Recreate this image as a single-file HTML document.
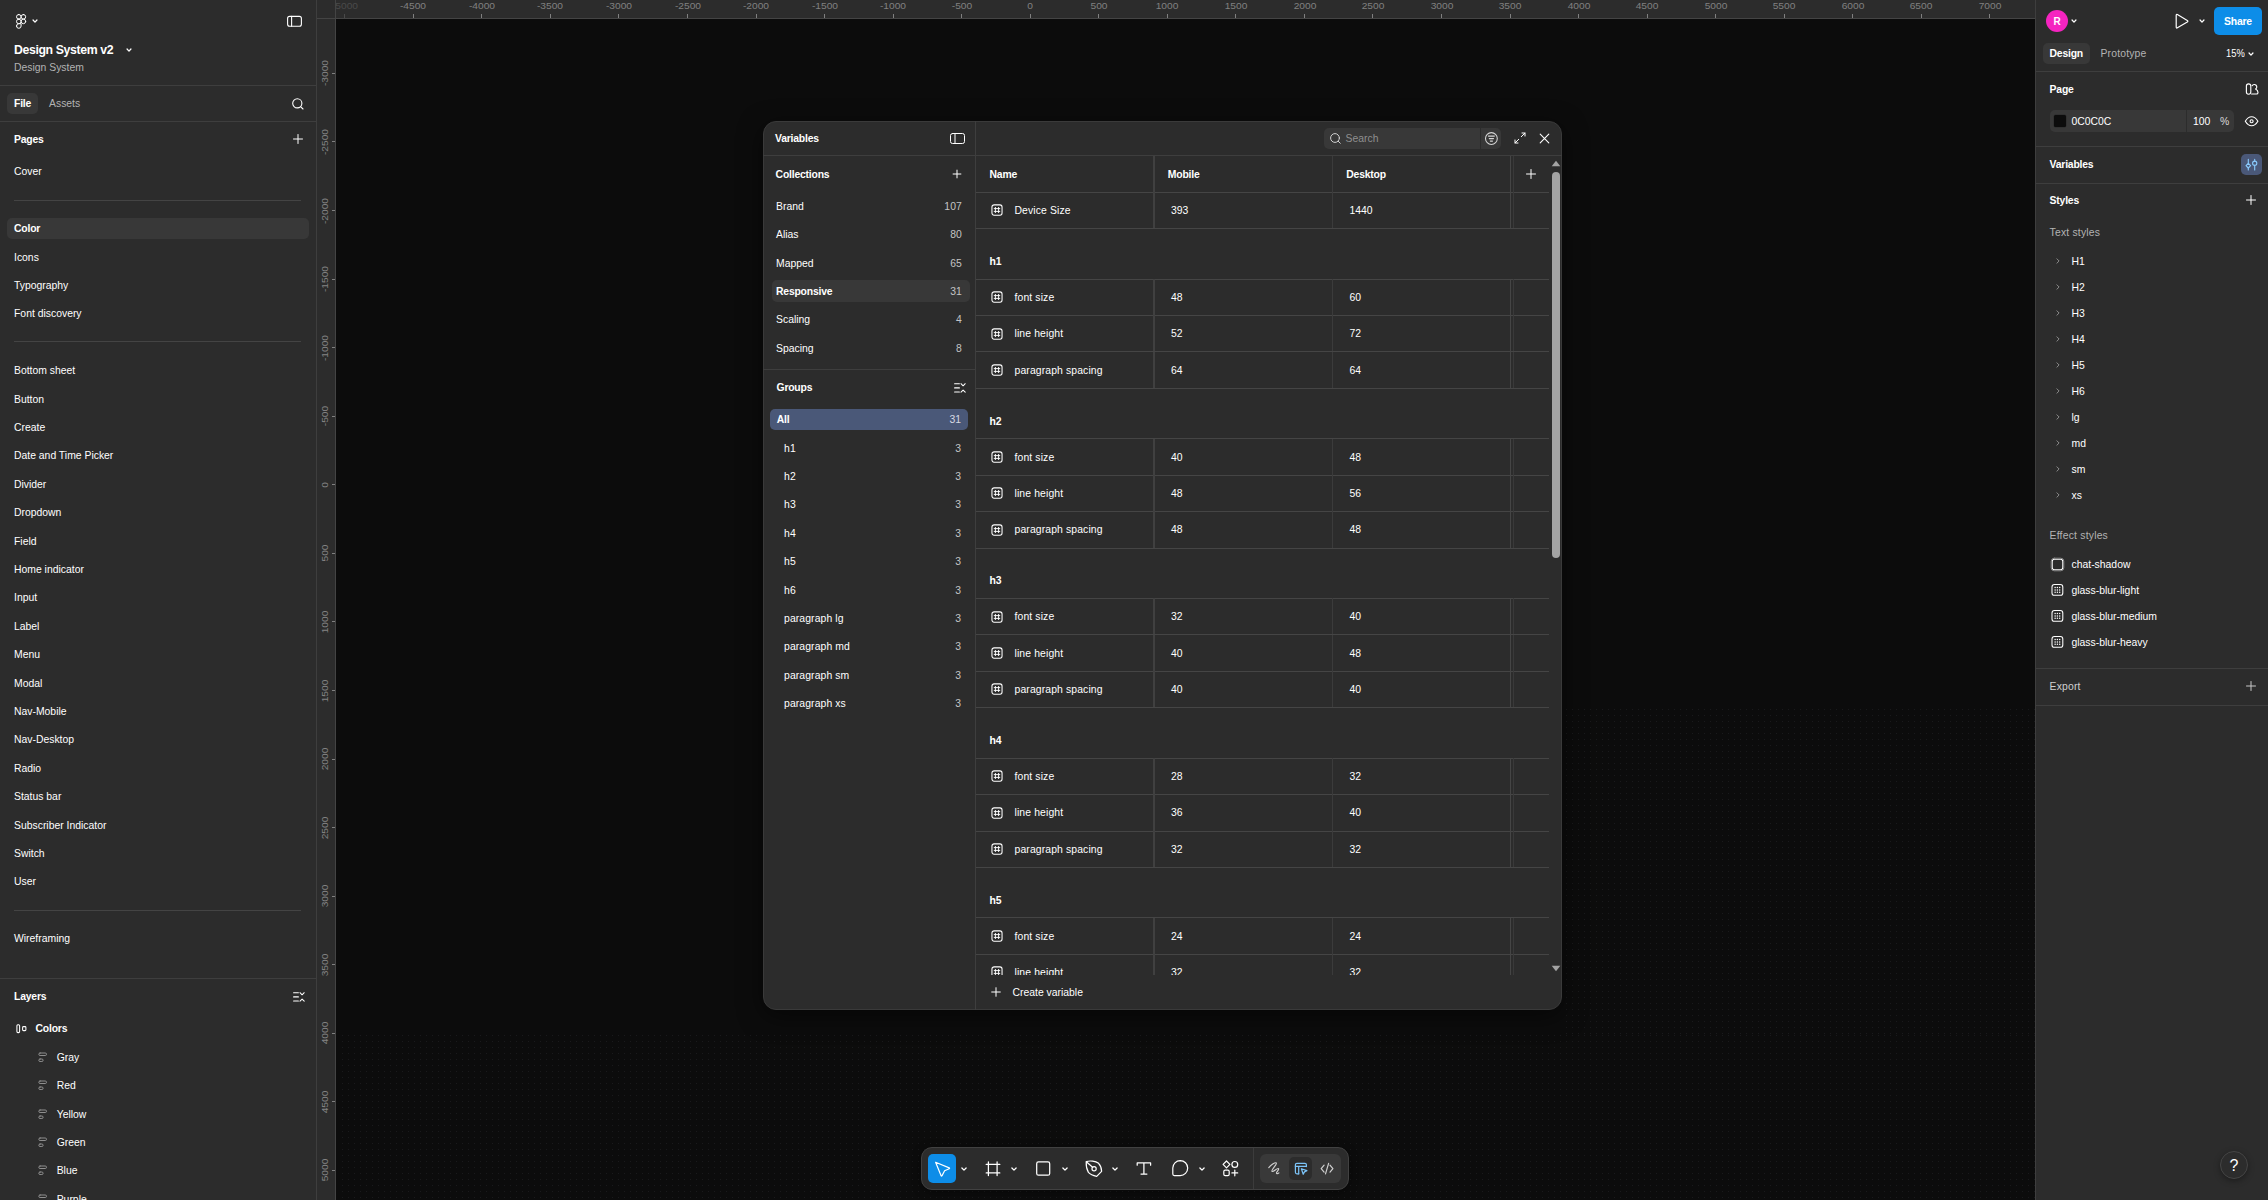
<!DOCTYPE html><html><head><meta charset="utf-8"><title>Design System v2 – Figma</title><style>
html,body{margin:0;padding:0;background:#0c0c0c}
body{width:2268px;height:1200px;overflow:hidden;position:relative;font-family:"Liberation Sans",sans-serif;font-size:10.4px;color:#fff}
.t{position:absolute;white-space:nowrap;line-height:16px;height:16px;color:#fff}
.t.b{font-weight:700;letter-spacing:-0.2px}
.t.g{color:#b3b3b3}
.ln{position:absolute}
.dots{position:absolute;background-image:radial-gradient(circle at 0.5px 0.5px,#1a1a1c 0.55px,rgba(26,26,28,0) 0.95px);background-size:6px 6px}
.ic{position:absolute;overflow:visible}
.clip{position:absolute;overflow:hidden}
.rt{position:absolute;width:60px;text-align:center;font-size:9px;line-height:13.6px;color:#848484;white-space:nowrap;transform:scaleX(1.135)}
.rv{position:absolute;width:60px;height:14px;text-align:center;font-size:9px;line-height:14px;color:#848484;white-space:nowrap;transform:rotate(-90deg) scaleX(1.135)}
</style></head><body>
<div class="dots" style="left:342px;top:1035px;width:1693px;height:165px"></div>
<div class="dots" style="left:1562px;top:708px;width:473px;height:327px;background-position:4px 1px"></div>
<div class="ln" style="left:0px;top:0px;width:316.00px;height:1200.00px;background:#2c2c2c;border-radius:0px;"></div>
<div class="ln" style="left:316px;top:0px;width:1px;height:1200px;background:#3e3e3e"></div>
<svg class="ic" style="left:15px;top:13px;" width="14" height="17" viewBox="0 0 14 17" fill="none" stroke="#fff" stroke-width="1" stroke-linecap="round" stroke-linejoin="round"><g stroke-width="1"><rect x="1.5" y="1.5" width="4.6" height="4.6" rx="2.3"/><rect x="6.1" y="1.5" width="4.6" height="4.6" rx="2.3"/><rect x="1.5" y="6.1" width="4.6" height="4.6" rx="2.3"/><circle cx="8.4" cy="8.4" r="2.3"/><path d="M1.5 13 a2.3 2.3 0 0 1 2.3 -2.3 h2.3 v2.3 a2.3 2.3 0 0 1 -4.6 0z"/></g></svg>
<svg class="ic" style="left:30.2px;top:17.400000000000002px" width="10" height="8" viewBox="0 0 10 8" fill="none" stroke="#fff" stroke-width="1.25" stroke-linecap="round" stroke-linejoin="round"><path d="M3.05 3.0 L5 5.1 L6.95 3.0"/></svg>
<svg class="ic" style="left:285px;top:13px" width="19" height="17" viewBox="285 13 19 17" fill="none" stroke="#fff" stroke-width="1.1" stroke-linecap="round" stroke-linejoin="round"><rect x="287.6" y="16.4" width="13.8" height="9.8" rx="2"/><path d="M291.6 16.4V26.2"/></svg>
<div class="t b" style="left:14px;top:42.00px;font-size:12.3px;letter-spacing:-0.38px">Design System v2</div>
<svg class="ic" style="left:124.00000000000001px;top:45.6px" width="10" height="8" viewBox="0 0 10 8" fill="none" stroke="#fff" stroke-width="1.25" stroke-linecap="round" stroke-linejoin="round"><path d="M3.05 3.0 L5 5.1 L6.95 3.0"/></svg>
<div class="t g" style="left:14px;top:60.30px;">Design System</div>
<div class="ln" style="left:0px;top:85px;width:316px;height:1px;background:#3e3e3e"></div>
<div class="ln" style="left:7px;top:93px;width:31.00px;height:21.00px;background:#383838;border-radius:5px;"></div>
<div class="t b" style="left:14px;top:95.80px;">File</div>
<div class="t g" style="left:49px;top:95.80px;">Assets</div>
<svg class="ic" style="left:291px;top:97px;stroke-width:1.1" width="14" height="14" viewBox="0 0 14 14" fill="none" stroke="#fff" stroke-width="1" stroke-linecap="round" stroke-linejoin="round"><circle cx="6.3" cy="6.3" r="4.6"/><path d="M9.8 9.8L12 12"/></svg>
<div class="ln" style="left:0px;top:121px;width:316px;height:1px;background:#3e3e3e"></div>
<div class="t b" style="left:14px;top:131.80px;">Pages</div>
<svg class="ic" style="left:291.5px;top:133px;" width="12" height="12" viewBox="0 0 12 12" fill="none" stroke="#fff" stroke-width="1" stroke-linecap="round" stroke-linejoin="round"><path d="M6 1.5V10.5M1.5 6H10.5" stroke="#fff"/></svg>
<div class="t " style="left:14px;top:164.30px;">Cover</div>
<div class="ln" style="left:14px;top:199.5px;width:287px;height:1px;background:#444"></div>
<div class="ln" style="left:7px;top:217.5px;width:301.50px;height:21.20px;background:#383838;border-radius:5px;"></div>
<div class="t b" style="left:14px;top:221.20px;">Color</div>
<div class="t " style="left:14px;top:249.60px;">Icons</div>
<div class="t " style="left:14px;top:277.99px;">Typography</div>
<div class="t " style="left:14px;top:306.38px;">Font discovery</div>
<div class="ln" style="left:14px;top:341.3px;width:287px;height:1px;background:#444"></div>
<div class="t " style="left:14px;top:363.30px;">Bottom sheet</div>
<div class="t " style="left:14px;top:391.69px;">Button</div>
<div class="t " style="left:14px;top:420.08px;">Create</div>
<div class="t " style="left:14px;top:448.47px;">Date and Time Picker</div>
<div class="t " style="left:14px;top:476.86px;">Divider</div>
<div class="t " style="left:14px;top:505.25px;">Dropdown</div>
<div class="t " style="left:14px;top:533.64px;">Field</div>
<div class="t " style="left:14px;top:562.03px;">Home indicator</div>
<div class="t " style="left:14px;top:590.42px;">Input</div>
<div class="t " style="left:14px;top:618.81px;">Label</div>
<div class="t " style="left:14px;top:647.20px;">Menu</div>
<div class="t " style="left:14px;top:675.59px;">Modal</div>
<div class="t " style="left:14px;top:703.98px;">Nav-Mobile</div>
<div class="t " style="left:14px;top:732.37px;">Nav-Desktop</div>
<div class="t " style="left:14px;top:760.76px;">Radio</div>
<div class="t " style="left:14px;top:789.15px;">Status bar</div>
<div class="t " style="left:14px;top:817.54px;">Subscriber Indicator</div>
<div class="t " style="left:14px;top:845.93px;">Switch</div>
<div class="t " style="left:14px;top:874.32px;">User</div>
<div class="ln" style="left:14px;top:909.5px;width:287px;height:1px;background:#444"></div>
<div class="t " style="left:14px;top:930.90px;">Wireframing</div>
<div class="ln" style="left:0px;top:978px;width:316px;height:1px;background:#3e3e3e"></div>
<div class="t b" style="left:14px;top:988.70px;">Layers</div>
<svg class="ic" style="left:292.5px;top:991.5px;" width="12" height="10" viewBox="0 0 12 10" fill="none" stroke="#fff" stroke-width="1" stroke-linecap="round" stroke-linejoin="round"><path d="M0.6 0.8H5.4M0.6 4.9H5.4M0.6 9H5.4" stroke-width="1.1"/><path d="M7 0.7L9.1 2.8L11.2 0.7M7 9.1L9.1 7.1L11.2 9.1" stroke-width="1.05"/></svg>
<svg class="ic" style="left:14px;top:1020px" width="16" height="17" viewBox="14 1020 16 17" fill="none" stroke="#fff" stroke-width="1.05" stroke-linecap="round" stroke-linejoin="round"><rect x="16.9" y="1024.7" width="2.7" height="7.9" rx="1"/><rect x="22.6" y="1026.6" width="3.3" height="4" rx="0.9"/></svg>
<div class="t b" style="left:35.5px;top:1020.80px;">Colors</div>
<svg class="ic" style="left:36px;top:1048.9px" width="14" height="16.0" viewBox="36 1048.9 14 16.0" fill="none" stroke="#8e8e8e" stroke-width="1.0" stroke-linecap="round" stroke-linejoin="round"><rect x="38.8" y="1052.90" width="7.7" height="2.5" rx="1.25"/><rect x="38.8" y="1058.90" width="4.3" height="2.5" rx="1.25"/></svg>
<div class="t " style="left:56.7px;top:1049.90px;">Gray</div>
<svg class="ic" style="left:36px;top:1077.2900000000002px" width="14" height="16.0" viewBox="36 1077.2900000000002 14 16.0" fill="none" stroke="#8e8e8e" stroke-width="1.0" stroke-linecap="round" stroke-linejoin="round"><rect x="38.8" y="1081.29" width="7.7" height="2.5" rx="1.25"/><rect x="38.8" y="1087.29" width="4.3" height="2.5" rx="1.25"/></svg>
<div class="t " style="left:56.7px;top:1078.29px;">Red</div>
<svg class="ic" style="left:36px;top:1105.68px" width="14" height="16.0" viewBox="36 1105.68 14 16.0" fill="none" stroke="#8e8e8e" stroke-width="1.0" stroke-linecap="round" stroke-linejoin="round"><rect x="38.8" y="1109.68" width="7.7" height="2.5" rx="1.25"/><rect x="38.8" y="1115.68" width="4.3" height="2.5" rx="1.25"/></svg>
<div class="t " style="left:56.7px;top:1106.68px;">Yellow</div>
<svg class="ic" style="left:36px;top:1134.0700000000002px" width="14" height="16.0" viewBox="36 1134.0700000000002 14 16.0" fill="none" stroke="#8e8e8e" stroke-width="1.0" stroke-linecap="round" stroke-linejoin="round"><rect x="38.8" y="1138.07" width="7.7" height="2.5" rx="1.25"/><rect x="38.8" y="1144.07" width="4.3" height="2.5" rx="1.25"/></svg>
<div class="t " style="left:56.7px;top:1135.07px;">Green</div>
<svg class="ic" style="left:36px;top:1162.46px" width="14" height="16.0" viewBox="36 1162.46 14 16.0" fill="none" stroke="#8e8e8e" stroke-width="1.0" stroke-linecap="round" stroke-linejoin="round"><rect x="38.8" y="1166.46" width="7.7" height="2.5" rx="1.25"/><rect x="38.8" y="1172.46" width="4.3" height="2.5" rx="1.25"/></svg>
<div class="t " style="left:56.7px;top:1163.46px;">Blue</div>
<svg class="ic" style="left:36px;top:1190.8500000000001px" width="14" height="16.0" viewBox="36 1190.8500000000001 14 16.0" fill="none" stroke="#8e8e8e" stroke-width="1.0" stroke-linecap="round" stroke-linejoin="round"><rect x="38.8" y="1194.85" width="7.7" height="2.5" rx="1.25"/><rect x="38.8" y="1200.85" width="4.3" height="2.5" rx="1.25"/></svg>
<div class="t " style="left:56.7px;top:1191.85px;">Purple</div>
<div class="ln" style="left:317px;top:0px;width:1718.00px;height:18.00px;background:#2c2c2c;border-radius:0px;"></div>
<div class="ln" style="left:317px;top:0px;width:18.00px;height:1200.00px;background:#2c2c2c;border-radius:0px;"></div>
<div class="ln" style="left:317px;top:18px;width:1718px;height:1px;background:#444"></div>
<div class="ln" style="left:335px;top:18px;width:1px;height:1182px;background:#444"></div>
<div class="rt" style="left:314.8px;top:0px;color:#4a4a4a">-5000</div>
<div class="ln" style="left:344px;top:14px;width:1px;height:4px;background:#4a4a4a"></div>
<div class="rt" style="left:383.3px;top:0px;color:#808080">-4500</div>
<div class="ln" style="left:413px;top:14px;width:1px;height:4px;background:#808080"></div>
<div class="rt" style="left:451.9px;top:0px;color:#808080">-4000</div>
<div class="ln" style="left:481px;top:14px;width:1px;height:4px;background:#808080"></div>
<div class="rt" style="left:520.4px;top:0px;color:#808080">-3500</div>
<div class="ln" style="left:550px;top:14px;width:1px;height:4px;background:#808080"></div>
<div class="rt" style="left:589.0px;top:0px;color:#808080">-3000</div>
<div class="ln" style="left:618px;top:14px;width:1px;height:4px;background:#808080"></div>
<div class="rt" style="left:657.5px;top:0px;color:#808080">-2500</div>
<div class="ln" style="left:687px;top:14px;width:1px;height:4px;background:#808080"></div>
<div class="rt" style="left:726.0px;top:0px;color:#808080">-2000</div>
<div class="ln" style="left:756px;top:14px;width:1px;height:4px;background:#808080"></div>
<div class="rt" style="left:794.6px;top:0px;color:#808080">-1500</div>
<div class="ln" style="left:824px;top:14px;width:1px;height:4px;background:#808080"></div>
<div class="rt" style="left:863.1px;top:0px;color:#808080">-1000</div>
<div class="ln" style="left:893px;top:14px;width:1px;height:4px;background:#808080"></div>
<div class="rt" style="left:931.7px;top:0px;color:#808080">-500</div>
<div class="ln" style="left:961px;top:14px;width:1px;height:4px;background:#808080"></div>
<div class="rt" style="left:1000.2px;top:0px;color:#808080">0</div>
<div class="ln" style="left:1030px;top:14px;width:1px;height:4px;background:#808080"></div>
<div class="rt" style="left:1068.8px;top:0px;color:#808080">500</div>
<div class="ln" style="left:1098px;top:14px;width:1px;height:4px;background:#808080"></div>
<div class="rt" style="left:1137.3px;top:0px;color:#808080">1000</div>
<div class="ln" style="left:1167px;top:14px;width:1px;height:4px;background:#808080"></div>
<div class="rt" style="left:1205.9px;top:0px;color:#808080">1500</div>
<div class="ln" style="left:1235px;top:14px;width:1px;height:4px;background:#808080"></div>
<div class="rt" style="left:1274.5px;top:0px;color:#808080">2000</div>
<div class="ln" style="left:1304px;top:14px;width:1px;height:4px;background:#808080"></div>
<div class="rt" style="left:1343.0px;top:0px;color:#808080">2500</div>
<div class="ln" style="left:1372px;top:14px;width:1px;height:4px;background:#808080"></div>
<div class="rt" style="left:1411.5px;top:0px;color:#808080">3000</div>
<div class="ln" style="left:1441px;top:14px;width:1px;height:4px;background:#808080"></div>
<div class="rt" style="left:1480.1px;top:0px;color:#808080">3500</div>
<div class="ln" style="left:1510px;top:14px;width:1px;height:4px;background:#808080"></div>
<div class="rt" style="left:1548.7px;top:0px;color:#808080">4000</div>
<div class="ln" style="left:1578px;top:14px;width:1px;height:4px;background:#808080"></div>
<div class="rt" style="left:1617.2px;top:0px;color:#808080">4500</div>
<div class="ln" style="left:1647px;top:14px;width:1px;height:4px;background:#808080"></div>
<div class="rt" style="left:1685.8px;top:0px;color:#808080">5000</div>
<div class="ln" style="left:1715px;top:14px;width:1px;height:4px;background:#808080"></div>
<div class="rt" style="left:1754.3px;top:0px;color:#808080">5500</div>
<div class="ln" style="left:1784px;top:14px;width:1px;height:4px;background:#808080"></div>
<div class="rt" style="left:1822.8px;top:0px;color:#808080">6000</div>
<div class="ln" style="left:1852px;top:14px;width:1px;height:4px;background:#808080"></div>
<div class="rt" style="left:1891.4px;top:0px;color:#808080">6500</div>
<div class="ln" style="left:1921px;top:14px;width:1px;height:4px;background:#808080"></div>
<div class="rt" style="left:1959.9px;top:0px;color:#808080">7000</div>
<div class="ln" style="left:1989px;top:14px;width:1px;height:4px;background:#808080"></div>
<div class="ln" style="left:317px;top:0px;width:18.00px;height:18.00px;background:#2c2c2c;border-radius:0px;"></div>
<div class="ln" style="left:335px;top:0px;width:1px;height:18px;background:#444"></div>
<div class="rv" style="left:294.6px;top:66.3px">-3000</div>
<div class="ln" style="left:332px;top:73px;width:3px;height:1px;background:#808080"></div>
<div class="rv" style="left:294.6px;top:134.9px">-2500</div>
<div class="ln" style="left:332px;top:141px;width:3px;height:1px;background:#808080"></div>
<div class="rv" style="left:294.6px;top:203.5px">-2000</div>
<div class="ln" style="left:332px;top:210px;width:3px;height:1px;background:#808080"></div>
<div class="rv" style="left:294.6px;top:272.0px">-1500</div>
<div class="ln" style="left:332px;top:279px;width:3px;height:1px;background:#808080"></div>
<div class="rv" style="left:294.6px;top:340.6px">-1000</div>
<div class="ln" style="left:332px;top:347px;width:3px;height:1px;background:#808080"></div>
<div class="rv" style="left:294.6px;top:409.2px">-500</div>
<div class="ln" style="left:332px;top:416px;width:3px;height:1px;background:#808080"></div>
<div class="rv" style="left:294.6px;top:477.8px">0</div>
<div class="ln" style="left:332px;top:484px;width:3px;height:1px;background:#808080"></div>
<div class="rv" style="left:294.6px;top:546.3px">500</div>
<div class="ln" style="left:332px;top:553px;width:3px;height:1px;background:#808080"></div>
<div class="rv" style="left:294.6px;top:614.9px">1000</div>
<div class="ln" style="left:332px;top:621px;width:3px;height:1px;background:#808080"></div>
<div class="rv" style="left:294.6px;top:683.5px">1500</div>
<div class="ln" style="left:332px;top:690px;width:3px;height:1px;background:#808080"></div>
<div class="rv" style="left:294.6px;top:752.0px">2000</div>
<div class="ln" style="left:332px;top:759px;width:3px;height:1px;background:#808080"></div>
<div class="rv" style="left:294.6px;top:820.6px">2500</div>
<div class="ln" style="left:332px;top:827px;width:3px;height:1px;background:#808080"></div>
<div class="rv" style="left:294.6px;top:889.2px">3000</div>
<div class="ln" style="left:332px;top:896px;width:3px;height:1px;background:#808080"></div>
<div class="rv" style="left:294.6px;top:957.7px">3500</div>
<div class="ln" style="left:332px;top:964px;width:3px;height:1px;background:#808080"></div>
<div class="rv" style="left:294.6px;top:1026.3px">4000</div>
<div class="ln" style="left:332px;top:1033px;width:3px;height:1px;background:#808080"></div>
<div class="rv" style="left:294.6px;top:1094.9px">4500</div>
<div class="ln" style="left:332px;top:1101px;width:3px;height:1px;background:#808080"></div>
<div class="rv" style="left:294.6px;top:1163.4px">5000</div>
<div class="ln" style="left:332px;top:1170px;width:3px;height:1px;background:#808080"></div>
<div class="ln" style="left:2035px;top:0px;width:233.00px;height:1200.00px;background:#2c2c2c;border-radius:0px;"></div>
<div class="ln" style="left:2035px;top:0px;width:1px;height:1200px;background:#3e3e3e"></div>
<div class="ln" style="left:2046px;top:10.3px;width:21.50px;height:21.50px;background:#f524c0;border-radius:11px;"></div>
<div class="t b" style="left:2053.4px;top:14.10px;font-size:10px;letter-spacing:0">R</div>
<svg class="ic" style="left:2069.2999999999997px;top:17.400000000000002px" width="10" height="8" viewBox="0 0 10 8" fill="none" stroke="#fff" stroke-width="1.25" stroke-linecap="round" stroke-linejoin="round"><path d="M3.05 3.0 L5 5.1 L6.95 3.0"/></svg>
<svg class="ic" style="left:2172px;top:11px" width="20" height="21" viewBox="2172 11 20 21" fill="none" stroke="#fff" stroke-width="1.2" stroke-linecap="round" stroke-linejoin="round"><path d="M2176.2 15.3 Q2176.2 13.9 2177.4 14.6 L2187.3 20.5 Q2188.4 21.2 2187.3 21.9 L2177.4 27.8 Q2176.2 28.5 2176.2 27.1 Z"/></svg>
<svg class="ic" style="left:2197.0px;top:17.400000000000002px" width="10" height="8" viewBox="0 0 10 8" fill="none" stroke="#fff" stroke-width="1.25" stroke-linecap="round" stroke-linejoin="round"><path d="M3.05 3.0 L5 5.1 L6.95 3.0"/></svg>
<div class="ln" style="left:2213.7px;top:7px;width:48.60px;height:28.00px;background:#0d8de8;border-radius:5px;"></div>
<div class="t b" style="left:2224px;top:14.20px;letter-spacing:-0.2px">Share</div>
<div class="ln" style="left:2042.5px;top:42.5px;width:47.50px;height:21.30px;background:#383838;border-radius:5px;"></div>
<div class="t b" style="left:2049.5px;top:46.30px;">Design</div>
<div class="t g" style="left:2100.5px;top:46.30px;letter-spacing:.17px">Prototype</div>
<div class="t " style="left:2226px;top:46.30px;transform:scaleX(.9);transform-origin:0 50%">15%</div>
<svg class="ic" style="left:2246.0px;top:49.6px" width="10" height="8" viewBox="0 0 10 8" fill="none" stroke="#fff" stroke-width="1.25" stroke-linecap="round" stroke-linejoin="round"><path d="M3.05 3.0 L5 5.1 L6.95 3.0"/></svg>
<div class="ln" style="left:2036px;top:71px;width:232px;height:1px;background:#3e3e3e"></div>
<div class="t b" style="left:2049.6px;top:81.70px;">Page</div>
<svg class="ic" style="left:2244px;top:81px" width="16" height="16" viewBox="2244 81 16 16" fill="none" stroke="#fff" stroke-width="1.15" stroke-linecap="round" stroke-linejoin="round"><rect x="2246.4" y="83.8" width="4.4" height="10.4" rx="2.2"/><path d="M2252.2 85.6 A2.5 2.5 0 1 1 2255.6 89.1 C2257.2 89.9 2258 91.2 2258 92.4 A1.6 1.6 0 0 1 2256.4 94 H2251.6"/></svg>
<div class="ln" style="left:2050px;top:110.2px;width:183.80px;height:21.60px;background:#383838;border-radius:5px;"></div>
<div class="ln" style="left:2054.2px;top:115px;width:11.80px;height:12.00px;background:#0c0c0c;border-radius:1.5px;box-shadow:0 0 0 0.5px #2a2a2a"></div>
<div class="t " style="left:2071.4px;top:114.20px;">0C0C0C</div>
<div class="ln" style="left:2186px;top:110.2px;width:1px;height:21.60000000000001px;background:#2c2c2c"></div>
<div class="t " style="left:2193px;top:114.20px;">100</div>
<div class="t " style="left:2220px;top:114.20px;color:#dcdcdc">%</div>
<svg class="ic" style="left:2243px;top:113px" width="18" height="17" viewBox="2243 113 18 17" fill="none" stroke="#fff" stroke-width="1.15" stroke-linecap="round" stroke-linejoin="round"><path d="M2245.3 121.2 C2247.2 118 2249.4 116.7 2251.6 116.7 S2256 118 2257.9 121.2 C2256 124.4 2253.8 125.7 2251.6 125.7 S2247.2 124.4 2245.3 121.2Z"/><circle cx="2251.6" cy="121.2" r="1.5"/></svg>
<div class="ln" style="left:2036px;top:146.3px;width:232px;height:1px;background:#3e3e3e"></div>
<div class="t b" style="left:2049.6px;top:156.70px;">Variables</div>
<div class="ln" style="left:2240.8px;top:153.8px;width:21.20px;height:21.20px;background:#4a5878;border-radius:5px;"></div>
<svg class="ic" style="left:2243px;top:156px" width="17" height="17" viewBox="2243 156 17 17" fill="none" stroke="#8accff" stroke-width="1.1" stroke-linecap="round" stroke-linejoin="round"><path d="M2248.3 159.4V163.4M2248.3 168V169.9M2254.7 159.4V161.1M2254.7 165.3V169.9"/><path d="M2248.3 163.4L2250.6 165.7L2248.3 168L2246 165.7Z"/><circle cx="2254.7" cy="163.2" r="2.1"/></svg>
<div class="ln" style="left:2036px;top:182.5px;width:232px;height:1px;background:#3e3e3e"></div>
<div class="t b" style="left:2049.6px;top:192.70px;">Styles</div>
<svg class="ic" style="left:2245px;top:194.3px;" width="12" height="12" viewBox="0 0 12 12" fill="none" stroke="#fff" stroke-width="1" stroke-linecap="round" stroke-linejoin="round"><path d="M6 1.5V10.5M1.5 6H10.5" stroke="#fff"/></svg>
<div class="t g" style="left:2049.6px;top:224.80px;letter-spacing:.18px">Text styles</div>
<svg class="ic" style="left:2054.5px;top:257.2px;" width="6" height="8" viewBox="0 0 6 8" fill="none" stroke="#fff" stroke-width="1" stroke-linecap="round" stroke-linejoin="round"><path d="M1.9 1.7999999999999998 L4.1 4 L1.9 6.2" stroke="#8a8a8a"/></svg>
<div class="t " style="left:2071.5px;top:254.20px;">H1</div>
<svg class="ic" style="left:2054.5px;top:283.23px;" width="6" height="8" viewBox="0 0 6 8" fill="none" stroke="#fff" stroke-width="1" stroke-linecap="round" stroke-linejoin="round"><path d="M1.9 1.7999999999999998 L4.1 4 L1.9 6.2" stroke="#8a8a8a"/></svg>
<div class="t " style="left:2071.5px;top:280.23px;">H2</div>
<svg class="ic" style="left:2054.5px;top:309.26px;" width="6" height="8" viewBox="0 0 6 8" fill="none" stroke="#fff" stroke-width="1" stroke-linecap="round" stroke-linejoin="round"><path d="M1.9 1.7999999999999998 L4.1 4 L1.9 6.2" stroke="#8a8a8a"/></svg>
<div class="t " style="left:2071.5px;top:306.26px;">H3</div>
<svg class="ic" style="left:2054.5px;top:335.28999999999996px;" width="6" height="8" viewBox="0 0 6 8" fill="none" stroke="#fff" stroke-width="1" stroke-linecap="round" stroke-linejoin="round"><path d="M1.9 1.7999999999999998 L4.1 4 L1.9 6.2" stroke="#8a8a8a"/></svg>
<div class="t " style="left:2071.5px;top:332.29px;">H4</div>
<svg class="ic" style="left:2054.5px;top:361.32px;" width="6" height="8" viewBox="0 0 6 8" fill="none" stroke="#fff" stroke-width="1" stroke-linecap="round" stroke-linejoin="round"><path d="M1.9 1.7999999999999998 L4.1 4 L1.9 6.2" stroke="#8a8a8a"/></svg>
<div class="t " style="left:2071.5px;top:358.32px;">H5</div>
<svg class="ic" style="left:2054.5px;top:387.35px;" width="6" height="8" viewBox="0 0 6 8" fill="none" stroke="#fff" stroke-width="1" stroke-linecap="round" stroke-linejoin="round"><path d="M1.9 1.7999999999999998 L4.1 4 L1.9 6.2" stroke="#8a8a8a"/></svg>
<div class="t " style="left:2071.5px;top:384.35px;">H6</div>
<svg class="ic" style="left:2054.5px;top:413.38px;" width="6" height="8" viewBox="0 0 6 8" fill="none" stroke="#fff" stroke-width="1" stroke-linecap="round" stroke-linejoin="round"><path d="M1.9 1.7999999999999998 L4.1 4 L1.9 6.2" stroke="#8a8a8a"/></svg>
<div class="t " style="left:2071.5px;top:410.38px;">lg</div>
<svg class="ic" style="left:2054.5px;top:439.40999999999997px;" width="6" height="8" viewBox="0 0 6 8" fill="none" stroke="#fff" stroke-width="1" stroke-linecap="round" stroke-linejoin="round"><path d="M1.9 1.7999999999999998 L4.1 4 L1.9 6.2" stroke="#8a8a8a"/></svg>
<div class="t " style="left:2071.5px;top:436.41px;">md</div>
<svg class="ic" style="left:2054.5px;top:465.44px;" width="6" height="8" viewBox="0 0 6 8" fill="none" stroke="#fff" stroke-width="1" stroke-linecap="round" stroke-linejoin="round"><path d="M1.9 1.7999999999999998 L4.1 4 L1.9 6.2" stroke="#8a8a8a"/></svg>
<div class="t " style="left:2071.5px;top:462.44px;">sm</div>
<svg class="ic" style="left:2054.5px;top:491.47px;" width="6" height="8" viewBox="0 0 6 8" fill="none" stroke="#fff" stroke-width="1" stroke-linecap="round" stroke-linejoin="round"><path d="M1.9 1.7999999999999998 L4.1 4 L1.9 6.2" stroke="#8a8a8a"/></svg>
<div class="t " style="left:2071.5px;top:488.47px;">xs</div>
<div class="t g" style="left:2049.6px;top:528.20px;letter-spacing:.2px">Effect styles</div>
<svg class="ic" style="left:2050px;top:556.5px;" width="15" height="15" viewBox="0 0 15 15" fill="none" stroke="#fff" stroke-width="1" stroke-linecap="round" stroke-linejoin="round"><rect x="2.2" y="2.2" width="10.6" height="10.6" rx="2.2" stroke="#fff" stroke-width="1.1"/><rect x="1.2" y="1.2" width="12.6" height="12.6" rx="3" stroke="#888" stroke-width="1"/></svg>
<div class="t " style="left:2071.5px;top:557.20px;">chat-shadow</div>
<svg class="ic" style="left:2050px;top:582.3px" width="16" height="16.0" viewBox="2050 582.3 16 16.0" fill="none" stroke="#fff" stroke-width="1.05" stroke-linecap="round" stroke-linejoin="round"><rect x="2052" y="584.8" width="10.8" height="10.8" rx="2.4"/><g fill="#fff" stroke="none"><circle cx="2055.1" cy="587.9" r=".75"/><circle cx="2055.1" cy="590.1999999999999" r=".75"/><circle cx="2055.1" cy="592.4999999999999" r=".75"/><circle cx="2057.4" cy="587.9" r=".75"/><circle cx="2057.4" cy="590.1999999999999" r=".75"/><circle cx="2057.4" cy="592.4999999999999" r=".75"/><circle cx="2059.7000000000003" cy="587.9" r=".75"/><circle cx="2059.7000000000003" cy="590.1999999999999" r=".75"/><circle cx="2059.7000000000003" cy="592.4999999999999" r=".75"/></g></svg>
<div class="t " style="left:2071.5px;top:583.30px;">glass-blur-light</div>
<svg class="ic" style="left:2050px;top:608.3299999999999px" width="16" height="16.0" viewBox="2050 608.3299999999999 16 16.0" fill="none" stroke="#fff" stroke-width="1.05" stroke-linecap="round" stroke-linejoin="round"><rect x="2052" y="610.8299999999999" width="10.8" height="10.8" rx="2.4"/><g fill="#fff" stroke="none"><circle cx="2055.1" cy="613.93" r=".75"/><circle cx="2055.1" cy="616.2299999999999" r=".75"/><circle cx="2055.1" cy="618.5299999999999" r=".75"/><circle cx="2057.4" cy="613.93" r=".75"/><circle cx="2057.4" cy="616.2299999999999" r=".75"/><circle cx="2057.4" cy="618.5299999999999" r=".75"/><circle cx="2059.7000000000003" cy="613.93" r=".75"/><circle cx="2059.7000000000003" cy="616.2299999999999" r=".75"/><circle cx="2059.7000000000003" cy="618.5299999999999" r=".75"/></g></svg>
<div class="t " style="left:2071.5px;top:609.33px;">glass-blur-medium</div>
<svg class="ic" style="left:2050px;top:634.3599999999999px" width="16" height="16.0" viewBox="2050 634.3599999999999 16 16.0" fill="none" stroke="#fff" stroke-width="1.05" stroke-linecap="round" stroke-linejoin="round"><rect x="2052" y="636.8599999999999" width="10.8" height="10.8" rx="2.4"/><g fill="#fff" stroke="none"><circle cx="2055.1" cy="639.9599999999999" r=".75"/><circle cx="2055.1" cy="642.2599999999999" r=".75"/><circle cx="2055.1" cy="644.5599999999998" r=".75"/><circle cx="2057.4" cy="639.9599999999999" r=".75"/><circle cx="2057.4" cy="642.2599999999999" r=".75"/><circle cx="2057.4" cy="644.5599999999998" r=".75"/><circle cx="2059.7000000000003" cy="639.9599999999999" r=".75"/><circle cx="2059.7000000000003" cy="642.2599999999999" r=".75"/><circle cx="2059.7000000000003" cy="644.5599999999998" r=".75"/></g></svg>
<div class="t " style="left:2071.5px;top:635.36px;">glass-blur-heavy</div>
<div class="ln" style="left:2036px;top:668px;width:232px;height:1px;background:#3e3e3e"></div>
<div class="t g" style="left:2049.6px;top:679.20px;color:#d0d0d0;letter-spacing:.17px">Export</div>
<svg class="ic" style="left:2245px;top:680px;" width="12" height="12" viewBox="0 0 12 12" fill="none" stroke="#fff" stroke-width="1" stroke-linecap="round" stroke-linejoin="round"><path d="M6 1.5V10.5M1.5 6H10.5" stroke="#c8c8c8"/></svg>
<div class="ln" style="left:2036px;top:704.5px;width:232px;height:1px;background:#3e3e3e"></div>
<div class="ln" style="left:2220px;top:1151px;width:28.00px;height:28.00px;background:#2c2c2c;border-radius:14px;box-sizing:border-box;border:1px solid #454545;box-shadow:0 2px 6px rgba(0,0,0,.35)"></div>
<div class="t " style="left:2229.4px;top:1158.00px;font-size:16px;line-height:16px">?</div>
<div class="ln" style="left:763px;top:121px;width:799px;height:889px;background:#2c2c2c;border-radius:13px;box-sizing:border-box;border:1px solid #3a3a3a;box-shadow:0 6px 24px rgba(0,0,0,.5)"></div>
<div class="ln" style="left:763px;top:155.3px;width:799px;height:1px;background:#3e3e3e"></div>
<div class="ln" style="left:975px;top:121px;width:1px;height:889px;background:#3e3e3e"></div>
<div class="t b" style="left:775px;top:131.00px;">Variables</div>
<svg class="ic" style="left:949px;top:131.5px;" width="17" height="13" viewBox="0 0 17 13" fill="none" stroke="#fff" stroke-width="1" stroke-linecap="round" stroke-linejoin="round"><rect x="1.5" y="1.5" width="14" height="10" rx="2"/><path d="M6 1.5V11.5"/></svg>
<div class="ln" style="left:1324.3px;top:128px;width:177.20px;height:20.80px;background:#383838;border-radius:5px;"></div>
<svg class="ic" style="left:1329px;top:132px;" width="13" height="13" viewBox="0 0 13 13" fill="none" stroke="#fff" stroke-width="1" stroke-linecap="round" stroke-linejoin="round"><circle cx="6" cy="6" r="4.4" stroke="#d0d0d0"/><path d="M9.3 9.3L11.3 11.3" stroke="#d0d0d0"/></svg>
<div class="t " style="left:1345.5px;top:131.30px;color:#8f8f8f">Search</div>
<div class="ln" style="left:1480px;top:128px;width:1px;height:20.80000000000001px;background:#2c2c2c"></div>
<svg class="ic" style="left:1483px;top:130px" width="17" height="17" viewBox="1483 130 17 17" fill="none" stroke="#d6d6d6" stroke-width="1.05" stroke-linecap="round" stroke-linejoin="round"><circle cx="1491.4" cy="138.5" r="5.9"/><path d="M1488.4 136.1H1494.4M1489.3 138.6H1493.5M1490.3 141.1H1492.5"/></svg>
<svg class="ic" style="left:1513px;top:131px;" width="14" height="14" viewBox="0 0 14 14" fill="none" stroke="#fff" stroke-width="1" stroke-linecap="round" stroke-linejoin="round"><path d="M8.3 5.7L12 2M9 2H12V5M5.7 8.3L2 12M2 9V12H5"/></svg>
<svg class="ic" style="left:1538px;top:131.5px;" width="13" height="13" viewBox="0 0 13 13" fill="none" stroke="#fff" stroke-width="1" stroke-linecap="round" stroke-linejoin="round"><path d="M2.2 2.2L10.8 10.8M10.8 2.2L2.2 10.8" stroke-width="1.1"/></svg>
<div class="t b" style="left:775.6px;top:167.00px;">Collections</div>
<svg class="ic" style="left:951.1px;top:167.8px;" width="12" height="12" viewBox="0 0 12 12" fill="none" stroke="#fff" stroke-width="1" stroke-linecap="round" stroke-linejoin="round"><path d="M6 2.1V9.9M2.1 6H9.9" stroke="#fff"/></svg>
<div class="ln" style="left:772px;top:280.2px;width:198.00px;height:21.60px;background:#383838;border-radius:5px;"></div>
<div class="t " style="left:776px;top:198.80px;">Brand</div>
<div class="t " style="right:1306.3px;top:198.80px;color:#c4c4c4">107</div>
<div class="t " style="left:776px;top:227.19px;">Alias</div>
<div class="t " style="right:1306.3px;top:227.19px;color:#c4c4c4">80</div>
<div class="t " style="left:776px;top:255.58px;">Mapped</div>
<div class="t " style="right:1306.3px;top:255.58px;color:#c4c4c4">65</div>
<div class="t b" style="left:776px;top:283.97px;">Responsive</div>
<div class="t " style="right:1306.3px;top:283.97px;color:#c4c4c4">31</div>
<div class="t " style="left:776px;top:312.36px;">Scaling</div>
<div class="t " style="right:1306.3px;top:312.36px;color:#c4c4c4">4</div>
<div class="t " style="left:776px;top:340.75px;">Spacing</div>
<div class="t " style="right:1306.3px;top:340.75px;color:#c4c4c4">8</div>
<div class="ln" style="left:763px;top:369.2px;width:212px;height:1px;background:#3e3e3e"></div>
<div class="t b" style="left:776.5px;top:380.40px;">Groups</div>
<svg class="ic" style="left:953.5px;top:382.5px;" width="12" height="10" viewBox="0 0 12 10" fill="none" stroke="#fff" stroke-width="1" stroke-linecap="round" stroke-linejoin="round"><path d="M0.6 0.8H5.4M0.6 4.9H5.4M0.6 9H5.4" stroke-width="1.1"/><path d="M7 0.7L9.1 2.8L11.2 0.7M7 9.1L9.1 7.1L11.2 9.1" stroke-width="1.05"/></svg>
<div class="ln" style="left:770px;top:408.7px;width:198.00px;height:21.10px;background:#4a5878;border-radius:5px;"></div>
<div class="t b" style="left:776.8px;top:412.30px;">All</div>
<div class="t " style="right:1307px;top:412.30px;color:#d6dae3">31</div>
<div class="t " style="left:784px;top:440.60px;letter-spacing:.1px">h1</div>
<div class="t " style="right:1307px;top:440.60px;color:#c4c4c4">3</div>
<div class="t " style="left:784px;top:468.99px;letter-spacing:.1px">h2</div>
<div class="t " style="right:1307px;top:468.99px;color:#c4c4c4">3</div>
<div class="t " style="left:784px;top:497.38px;letter-spacing:.1px">h3</div>
<div class="t " style="right:1307px;top:497.38px;color:#c4c4c4">3</div>
<div class="t " style="left:784px;top:525.77px;letter-spacing:.1px">h4</div>
<div class="t " style="right:1307px;top:525.77px;color:#c4c4c4">3</div>
<div class="t " style="left:784px;top:554.16px;letter-spacing:.1px">h5</div>
<div class="t " style="right:1307px;top:554.16px;color:#c4c4c4">3</div>
<div class="t " style="left:784px;top:582.55px;letter-spacing:.1px">h6</div>
<div class="t " style="right:1307px;top:582.55px;color:#c4c4c4">3</div>
<div class="t " style="left:784px;top:610.94px;letter-spacing:.1px">paragraph lg</div>
<div class="t " style="right:1307px;top:610.94px;color:#c4c4c4">3</div>
<div class="t " style="left:784px;top:639.33px;letter-spacing:.1px">paragraph md</div>
<div class="t " style="right:1307px;top:639.33px;color:#c4c4c4">3</div>
<div class="t " style="left:784px;top:667.72px;letter-spacing:.1px">paragraph sm</div>
<div class="t " style="right:1307px;top:667.72px;color:#c4c4c4">3</div>
<div class="t " style="left:784px;top:696.11px;letter-spacing:.1px">paragraph xs</div>
<div class="t " style="right:1307px;top:696.11px;color:#c4c4c4">3</div>
<div class="clip" style="left:0;top:156px;width:2268px;height:818.5px">
<div class="t b" style="left:989.5px;top:11.00px;">Name</div>
<div class="t b" style="left:1167.8px;top:11.00px;">Mobile</div>
<div class="t b" style="left:1346.3px;top:11.00px;">Desktop</div>
<svg class="ic" style="left:1525px;top:11.699999999999989px" width="12" height="12" viewBox="0 0 12 12" fill="none" stroke="#fff" stroke-linecap="round"><path d="M6 1.5V10.5M1.5 6H10.5"/></svg>
<div class="ln" style="left:1153px;top:0.00px;width:1.7px;height:36.00px;background:#404040"></div>
<div class="ln" style="left:1331.7px;top:0.00px;width:1.3px;height:36.00px;background:#3b3b3b"></div>
<div class="ln" style="left:1510px;top:0.00px;width:1px;height:36.00px;background:#454545"></div>
<div class="ln" style="left:1513.1px;top:0.00px;width:1.1px;height:36.00px;background:#393939"></div>
<div class="ln" style="left:976px;top:35.70px;width:573px;height:1px;background:#454545"></div>
<svg class="ic" style="left:990.1px;top:47.30px" width="14" height="14" viewBox="0 0 14 14" fill="none" stroke="#fff" stroke-width="1.05" stroke-linecap="round"><rect x="1.95" y="1.85" width="10.1" height="10.3" rx="2.1"/><path d="M5.4 4.4V9.6M8.6 4.4V9.6M4.2 5.6H9.8M4.2 8.4H9.8" stroke-width=".95"/></svg>
<div class="t " style="left:1014.5px;top:47.00px;letter-spacing:.12px">Device Size</div>
<div class="t " style="left:1171px;top:47.00px;">393</div>
<div class="t " style="left:1349.5px;top:47.00px;">1440</div>
<div class="ln" style="left:1153px;top:36.00px;width:1.7px;height:36.40px;background:#404040"></div>
<div class="ln" style="left:1331.7px;top:36.00px;width:1.3px;height:36.40px;background:#3b3b3b"></div>
<div class="ln" style="left:1510px;top:36.00px;width:1px;height:36.40px;background:#454545"></div>
<div class="ln" style="left:1513.1px;top:36.00px;width:1.1px;height:36.40px;background:#393939"></div>
<div class="ln" style="left:976px;top:72.10px;width:573px;height:1px;background:#454545"></div>
<div class="t b" style="left:989.5px;top:98.00px;">h1</div>
<div class="ln" style="left:976px;top:122.60px;width:573px;height:1px;background:#454545"></div>
<svg class="ic" style="left:990.1px;top:134.20px" width="14" height="14" viewBox="0 0 14 14" fill="none" stroke="#fff" stroke-width="1.05" stroke-linecap="round"><rect x="1.95" y="1.85" width="10.1" height="10.3" rx="2.1"/><path d="M5.4 4.4V9.6M8.6 4.4V9.6M4.2 5.6H9.8M4.2 8.4H9.8" stroke-width=".95"/></svg>
<div class="t " style="left:1014.5px;top:133.90px;letter-spacing:.12px">font size</div>
<div class="t " style="left:1171px;top:133.90px;">48</div>
<div class="t " style="left:1349.5px;top:133.90px;">60</div>
<div class="ln" style="left:1153px;top:122.90px;width:1.7px;height:36.40px;background:#404040"></div>
<div class="ln" style="left:1331.7px;top:122.90px;width:1.3px;height:36.40px;background:#3b3b3b"></div>
<div class="ln" style="left:1510px;top:122.90px;width:1px;height:36.40px;background:#454545"></div>
<div class="ln" style="left:1513.1px;top:122.90px;width:1.1px;height:36.40px;background:#393939"></div>
<div class="ln" style="left:976px;top:159.00px;width:573px;height:1px;background:#454545"></div>
<svg class="ic" style="left:990.1px;top:170.60px" width="14" height="14" viewBox="0 0 14 14" fill="none" stroke="#fff" stroke-width="1.05" stroke-linecap="round"><rect x="1.95" y="1.85" width="10.1" height="10.3" rx="2.1"/><path d="M5.4 4.4V9.6M8.6 4.4V9.6M4.2 5.6H9.8M4.2 8.4H9.8" stroke-width=".95"/></svg>
<div class="t " style="left:1014.5px;top:170.30px;letter-spacing:.12px">line height</div>
<div class="t " style="left:1171px;top:170.30px;">52</div>
<div class="t " style="left:1349.5px;top:170.30px;">72</div>
<div class="ln" style="left:1153px;top:159.30px;width:1.7px;height:36.40px;background:#404040"></div>
<div class="ln" style="left:1331.7px;top:159.30px;width:1.3px;height:36.40px;background:#3b3b3b"></div>
<div class="ln" style="left:1510px;top:159.30px;width:1px;height:36.40px;background:#454545"></div>
<div class="ln" style="left:1513.1px;top:159.30px;width:1.1px;height:36.40px;background:#393939"></div>
<div class="ln" style="left:976px;top:195.40px;width:573px;height:1px;background:#454545"></div>
<svg class="ic" style="left:990.1px;top:207.00px" width="14" height="14" viewBox="0 0 14 14" fill="none" stroke="#fff" stroke-width="1.05" stroke-linecap="round"><rect x="1.95" y="1.85" width="10.1" height="10.3" rx="2.1"/><path d="M5.4 4.4V9.6M8.6 4.4V9.6M4.2 5.6H9.8M4.2 8.4H9.8" stroke-width=".95"/></svg>
<div class="t " style="left:1014.5px;top:206.70px;letter-spacing:.12px">paragraph spacing</div>
<div class="t " style="left:1171px;top:206.70px;">64</div>
<div class="t " style="left:1349.5px;top:206.70px;">64</div>
<div class="ln" style="left:1153px;top:195.70px;width:1.7px;height:36.40px;background:#404040"></div>
<div class="ln" style="left:1331.7px;top:195.70px;width:1.3px;height:36.40px;background:#3b3b3b"></div>
<div class="ln" style="left:1510px;top:195.70px;width:1px;height:36.40px;background:#454545"></div>
<div class="ln" style="left:1513.1px;top:195.70px;width:1.1px;height:36.40px;background:#393939"></div>
<div class="ln" style="left:976px;top:231.80px;width:573px;height:1px;background:#454545"></div>
<div class="t b" style="left:989.5px;top:257.70px;">h2</div>
<div class="ln" style="left:976px;top:282.30px;width:573px;height:1px;background:#454545"></div>
<svg class="ic" style="left:990.1px;top:293.90px" width="14" height="14" viewBox="0 0 14 14" fill="none" stroke="#fff" stroke-width="1.05" stroke-linecap="round"><rect x="1.95" y="1.85" width="10.1" height="10.3" rx="2.1"/><path d="M5.4 4.4V9.6M8.6 4.4V9.6M4.2 5.6H9.8M4.2 8.4H9.8" stroke-width=".95"/></svg>
<div class="t " style="left:1014.5px;top:293.60px;letter-spacing:.12px">font size</div>
<div class="t " style="left:1171px;top:293.60px;">40</div>
<div class="t " style="left:1349.5px;top:293.60px;">48</div>
<div class="ln" style="left:1153px;top:282.60px;width:1.7px;height:36.40px;background:#404040"></div>
<div class="ln" style="left:1331.7px;top:282.60px;width:1.3px;height:36.40px;background:#3b3b3b"></div>
<div class="ln" style="left:1510px;top:282.60px;width:1px;height:36.40px;background:#454545"></div>
<div class="ln" style="left:1513.1px;top:282.60px;width:1.1px;height:36.40px;background:#393939"></div>
<div class="ln" style="left:976px;top:318.70px;width:573px;height:1px;background:#454545"></div>
<svg class="ic" style="left:990.1px;top:330.30px" width="14" height="14" viewBox="0 0 14 14" fill="none" stroke="#fff" stroke-width="1.05" stroke-linecap="round"><rect x="1.95" y="1.85" width="10.1" height="10.3" rx="2.1"/><path d="M5.4 4.4V9.6M8.6 4.4V9.6M4.2 5.6H9.8M4.2 8.4H9.8" stroke-width=".95"/></svg>
<div class="t " style="left:1014.5px;top:330.00px;letter-spacing:.12px">line height</div>
<div class="t " style="left:1171px;top:330.00px;">48</div>
<div class="t " style="left:1349.5px;top:330.00px;">56</div>
<div class="ln" style="left:1153px;top:319.00px;width:1.7px;height:36.40px;background:#404040"></div>
<div class="ln" style="left:1331.7px;top:319.00px;width:1.3px;height:36.40px;background:#3b3b3b"></div>
<div class="ln" style="left:1510px;top:319.00px;width:1px;height:36.40px;background:#454545"></div>
<div class="ln" style="left:1513.1px;top:319.00px;width:1.1px;height:36.40px;background:#393939"></div>
<div class="ln" style="left:976px;top:355.10px;width:573px;height:1px;background:#454545"></div>
<svg class="ic" style="left:990.1px;top:366.70px" width="14" height="14" viewBox="0 0 14 14" fill="none" stroke="#fff" stroke-width="1.05" stroke-linecap="round"><rect x="1.95" y="1.85" width="10.1" height="10.3" rx="2.1"/><path d="M5.4 4.4V9.6M8.6 4.4V9.6M4.2 5.6H9.8M4.2 8.4H9.8" stroke-width=".95"/></svg>
<div class="t " style="left:1014.5px;top:366.40px;letter-spacing:.12px">paragraph spacing</div>
<div class="t " style="left:1171px;top:366.40px;">48</div>
<div class="t " style="left:1349.5px;top:366.40px;">48</div>
<div class="ln" style="left:1153px;top:355.40px;width:1.7px;height:36.40px;background:#404040"></div>
<div class="ln" style="left:1331.7px;top:355.40px;width:1.3px;height:36.40px;background:#3b3b3b"></div>
<div class="ln" style="left:1510px;top:355.40px;width:1px;height:36.40px;background:#454545"></div>
<div class="ln" style="left:1513.1px;top:355.40px;width:1.1px;height:36.40px;background:#393939"></div>
<div class="ln" style="left:976px;top:391.50px;width:573px;height:1px;background:#454545"></div>
<div class="t b" style="left:989.5px;top:417.40px;">h3</div>
<div class="ln" style="left:976px;top:442.00px;width:573px;height:1px;background:#454545"></div>
<svg class="ic" style="left:990.1px;top:453.60px" width="14" height="14" viewBox="0 0 14 14" fill="none" stroke="#fff" stroke-width="1.05" stroke-linecap="round"><rect x="1.95" y="1.85" width="10.1" height="10.3" rx="2.1"/><path d="M5.4 4.4V9.6M8.6 4.4V9.6M4.2 5.6H9.8M4.2 8.4H9.8" stroke-width=".95"/></svg>
<div class="t " style="left:1014.5px;top:453.30px;letter-spacing:.12px">font size</div>
<div class="t " style="left:1171px;top:453.30px;">32</div>
<div class="t " style="left:1349.5px;top:453.30px;">40</div>
<div class="ln" style="left:1153px;top:442.30px;width:1.7px;height:36.40px;background:#404040"></div>
<div class="ln" style="left:1331.7px;top:442.30px;width:1.3px;height:36.40px;background:#3b3b3b"></div>
<div class="ln" style="left:1510px;top:442.30px;width:1px;height:36.40px;background:#454545"></div>
<div class="ln" style="left:1513.1px;top:442.30px;width:1.1px;height:36.40px;background:#393939"></div>
<div class="ln" style="left:976px;top:478.40px;width:573px;height:1px;background:#454545"></div>
<svg class="ic" style="left:990.1px;top:490.00px" width="14" height="14" viewBox="0 0 14 14" fill="none" stroke="#fff" stroke-width="1.05" stroke-linecap="round"><rect x="1.95" y="1.85" width="10.1" height="10.3" rx="2.1"/><path d="M5.4 4.4V9.6M8.6 4.4V9.6M4.2 5.6H9.8M4.2 8.4H9.8" stroke-width=".95"/></svg>
<div class="t " style="left:1014.5px;top:489.70px;letter-spacing:.12px">line height</div>
<div class="t " style="left:1171px;top:489.70px;">40</div>
<div class="t " style="left:1349.5px;top:489.70px;">48</div>
<div class="ln" style="left:1153px;top:478.70px;width:1.7px;height:36.40px;background:#404040"></div>
<div class="ln" style="left:1331.7px;top:478.70px;width:1.3px;height:36.40px;background:#3b3b3b"></div>
<div class="ln" style="left:1510px;top:478.70px;width:1px;height:36.40px;background:#454545"></div>
<div class="ln" style="left:1513.1px;top:478.70px;width:1.1px;height:36.40px;background:#393939"></div>
<div class="ln" style="left:976px;top:514.80px;width:573px;height:1px;background:#454545"></div>
<svg class="ic" style="left:990.1px;top:526.40px" width="14" height="14" viewBox="0 0 14 14" fill="none" stroke="#fff" stroke-width="1.05" stroke-linecap="round"><rect x="1.95" y="1.85" width="10.1" height="10.3" rx="2.1"/><path d="M5.4 4.4V9.6M8.6 4.4V9.6M4.2 5.6H9.8M4.2 8.4H9.8" stroke-width=".95"/></svg>
<div class="t " style="left:1014.5px;top:526.10px;letter-spacing:.12px">paragraph spacing</div>
<div class="t " style="left:1171px;top:526.10px;">40</div>
<div class="t " style="left:1349.5px;top:526.10px;">40</div>
<div class="ln" style="left:1153px;top:515.10px;width:1.7px;height:36.40px;background:#404040"></div>
<div class="ln" style="left:1331.7px;top:515.10px;width:1.3px;height:36.40px;background:#3b3b3b"></div>
<div class="ln" style="left:1510px;top:515.10px;width:1px;height:36.40px;background:#454545"></div>
<div class="ln" style="left:1513.1px;top:515.10px;width:1.1px;height:36.40px;background:#393939"></div>
<div class="ln" style="left:976px;top:551.20px;width:573px;height:1px;background:#454545"></div>
<div class="t b" style="left:989.5px;top:577.10px;">h4</div>
<div class="ln" style="left:976px;top:601.70px;width:573px;height:1px;background:#454545"></div>
<svg class="ic" style="left:990.1px;top:613.30px" width="14" height="14" viewBox="0 0 14 14" fill="none" stroke="#fff" stroke-width="1.05" stroke-linecap="round"><rect x="1.95" y="1.85" width="10.1" height="10.3" rx="2.1"/><path d="M5.4 4.4V9.6M8.6 4.4V9.6M4.2 5.6H9.8M4.2 8.4H9.8" stroke-width=".95"/></svg>
<div class="t " style="left:1014.5px;top:613.00px;letter-spacing:.12px">font size</div>
<div class="t " style="left:1171px;top:613.00px;">28</div>
<div class="t " style="left:1349.5px;top:613.00px;">32</div>
<div class="ln" style="left:1153px;top:602.00px;width:1.7px;height:36.40px;background:#404040"></div>
<div class="ln" style="left:1331.7px;top:602.00px;width:1.3px;height:36.40px;background:#3b3b3b"></div>
<div class="ln" style="left:1510px;top:602.00px;width:1px;height:36.40px;background:#454545"></div>
<div class="ln" style="left:1513.1px;top:602.00px;width:1.1px;height:36.40px;background:#393939"></div>
<div class="ln" style="left:976px;top:638.10px;width:573px;height:1px;background:#454545"></div>
<svg class="ic" style="left:990.1px;top:649.70px" width="14" height="14" viewBox="0 0 14 14" fill="none" stroke="#fff" stroke-width="1.05" stroke-linecap="round"><rect x="1.95" y="1.85" width="10.1" height="10.3" rx="2.1"/><path d="M5.4 4.4V9.6M8.6 4.4V9.6M4.2 5.6H9.8M4.2 8.4H9.8" stroke-width=".95"/></svg>
<div class="t " style="left:1014.5px;top:649.40px;letter-spacing:.12px">line height</div>
<div class="t " style="left:1171px;top:649.40px;">36</div>
<div class="t " style="left:1349.5px;top:649.40px;">40</div>
<div class="ln" style="left:1153px;top:638.40px;width:1.7px;height:36.40px;background:#404040"></div>
<div class="ln" style="left:1331.7px;top:638.40px;width:1.3px;height:36.40px;background:#3b3b3b"></div>
<div class="ln" style="left:1510px;top:638.40px;width:1px;height:36.40px;background:#454545"></div>
<div class="ln" style="left:1513.1px;top:638.40px;width:1.1px;height:36.40px;background:#393939"></div>
<div class="ln" style="left:976px;top:674.50px;width:573px;height:1px;background:#454545"></div>
<svg class="ic" style="left:990.1px;top:686.10px" width="14" height="14" viewBox="0 0 14 14" fill="none" stroke="#fff" stroke-width="1.05" stroke-linecap="round"><rect x="1.95" y="1.85" width="10.1" height="10.3" rx="2.1"/><path d="M5.4 4.4V9.6M8.6 4.4V9.6M4.2 5.6H9.8M4.2 8.4H9.8" stroke-width=".95"/></svg>
<div class="t " style="left:1014.5px;top:685.80px;letter-spacing:.12px">paragraph spacing</div>
<div class="t " style="left:1171px;top:685.80px;">32</div>
<div class="t " style="left:1349.5px;top:685.80px;">32</div>
<div class="ln" style="left:1153px;top:674.80px;width:1.7px;height:36.40px;background:#404040"></div>
<div class="ln" style="left:1331.7px;top:674.80px;width:1.3px;height:36.40px;background:#3b3b3b"></div>
<div class="ln" style="left:1510px;top:674.80px;width:1px;height:36.40px;background:#454545"></div>
<div class="ln" style="left:1513.1px;top:674.80px;width:1.1px;height:36.40px;background:#393939"></div>
<div class="ln" style="left:976px;top:710.90px;width:573px;height:1px;background:#454545"></div>
<div class="t b" style="left:989.5px;top:736.80px;">h5</div>
<div class="ln" style="left:976px;top:761.40px;width:573px;height:1px;background:#454545"></div>
<svg class="ic" style="left:990.1px;top:773.00px" width="14" height="14" viewBox="0 0 14 14" fill="none" stroke="#fff" stroke-width="1.05" stroke-linecap="round"><rect x="1.95" y="1.85" width="10.1" height="10.3" rx="2.1"/><path d="M5.4 4.4V9.6M8.6 4.4V9.6M4.2 5.6H9.8M4.2 8.4H9.8" stroke-width=".95"/></svg>
<div class="t " style="left:1014.5px;top:772.70px;letter-spacing:.12px">font size</div>
<div class="t " style="left:1171px;top:772.70px;">24</div>
<div class="t " style="left:1349.5px;top:772.70px;">24</div>
<div class="ln" style="left:1153px;top:761.70px;width:1.7px;height:36.40px;background:#404040"></div>
<div class="ln" style="left:1331.7px;top:761.70px;width:1.3px;height:36.40px;background:#3b3b3b"></div>
<div class="ln" style="left:1510px;top:761.70px;width:1px;height:36.40px;background:#454545"></div>
<div class="ln" style="left:1513.1px;top:761.70px;width:1.1px;height:36.40px;background:#393939"></div>
<div class="ln" style="left:976px;top:797.80px;width:573px;height:1px;background:#454545"></div>
<svg class="ic" style="left:990.1px;top:809.40px" width="14" height="14" viewBox="0 0 14 14" fill="none" stroke="#fff" stroke-width="1.05" stroke-linecap="round"><rect x="1.95" y="1.85" width="10.1" height="10.3" rx="2.1"/><path d="M5.4 4.4V9.6M8.6 4.4V9.6M4.2 5.6H9.8M4.2 8.4H9.8" stroke-width=".95"/></svg>
<div class="t " style="left:1014.5px;top:809.10px;letter-spacing:.12px">line height</div>
<div class="t " style="left:1171px;top:809.10px;">32</div>
<div class="t " style="left:1349.5px;top:809.10px;">32</div>
<div class="ln" style="left:1153px;top:798.10px;width:1.7px;height:36.40px;background:#404040"></div>
<div class="ln" style="left:1331.7px;top:798.10px;width:1.3px;height:36.40px;background:#3b3b3b"></div>
<div class="ln" style="left:1510px;top:798.10px;width:1px;height:36.40px;background:#454545"></div>
<div class="ln" style="left:1513.1px;top:798.10px;width:1.1px;height:36.40px;background:#393939"></div>
<div class="ln" style="left:976px;top:834.20px;width:573px;height:1px;background:#454545"></div>
<svg class="ic" style="left:990.1px;top:845.80px" width="14" height="14" viewBox="0 0 14 14" fill="none" stroke="#fff" stroke-width="1.05" stroke-linecap="round"><rect x="1.95" y="1.85" width="10.1" height="10.3" rx="2.1"/><path d="M5.4 4.4V9.6M8.6 4.4V9.6M4.2 5.6H9.8M4.2 8.4H9.8" stroke-width=".95"/></svg>
<div class="t " style="left:1014.5px;top:845.50px;letter-spacing:.12px">paragraph spacing</div>
<div class="t " style="left:1171px;top:845.50px;">32</div>
<div class="t " style="left:1349.5px;top:845.50px;">32</div>
<div class="ln" style="left:1153px;top:834.50px;width:1.7px;height:36.40px;background:#404040"></div>
<div class="ln" style="left:1331.7px;top:834.50px;width:1.3px;height:36.40px;background:#3b3b3b"></div>
<div class="ln" style="left:1510px;top:834.50px;width:1px;height:36.40px;background:#454545"></div>
<div class="ln" style="left:1513.1px;top:834.50px;width:1.1px;height:36.40px;background:#393939"></div>
<div class="ln" style="left:976px;top:870.60px;width:573px;height:1px;background:#454545"></div>
</div>
<div class="ln" style="left:1552.4px;top:172px;width:7.90px;height:386.00px;background:#a3a3a3;border-radius:4px;"></div>
<svg class="ic" style="left:1551.2px;top:159.7px" width="10" height="7" viewBox="0 0 10 7"><path d="M5 0.8L9.3 6.2H0.7Z" fill="#a3a3a3"/></svg>
<svg class="ic" style="left:1551.2px;top:964.5px" width="10" height="7" viewBox="0 0 10 7"><path d="M5 6.2L9.3 0.8H0.7Z" fill="#a3a3a3"/></svg>
<svg class="ic" style="left:989.5px;top:986px;" width="12" height="12" viewBox="0 0 12 12" fill="none" stroke="#fff" stroke-width="1" stroke-linecap="round" stroke-linejoin="round"><path d="M6 1.7000000000000002V10.3M1.7000000000000002 6H10.3" stroke="#fff"/></svg>
<div class="t " style="left:1012.5px;top:984.80px;">Create variable</div>
<div class="ln" style="left:921.2px;top:1147.1px;width:427.4px;height:42.8px;background:#2c2c2c;border-radius:11px;box-sizing:border-box;border:1px solid #414141;box-shadow:0 2px 10px rgba(0,0,0,.4)"></div>
<div class="ln" style="left:928px;top:1154.4px;width:28.40px;height:28.40px;background:#0d8de8;border-radius:5px;"></div>
<svg class="ic" style="left:930px;top:1157px" width="25" height="24" viewBox="930 1157 25 24" fill="none" stroke="#fff" stroke-width="1.2" stroke-linecap="round" stroke-linejoin="round"><path d="M935.6 1162.3 L949.2 1167.9 Q950 1168.3 949.2 1168.7 L944.6 1170.7 L942 1175.8 Q941.5 1176.6 941.1 1175.8 Z"/></svg>
<svg class="ic" style="left:959.3px;top:1165.2px" width="10.0" height="8.0" viewBox="959.3 1165.2 10.0 8.0" fill="none" stroke="#fff" stroke-width="1.3" stroke-linecap="round" stroke-linejoin="round"><path d="M962.1999999999999 1168.2L964.3 1170.3L966.4 1168.2"/></svg>
<svg class="ic" style="left:984px;top:1159px" width="19" height="19" viewBox="984 1159 19 19" fill="none" stroke="#fff" stroke-width="1.25" stroke-linecap="round" stroke-linejoin="round"><path d="M988.4 1161.9V1175.6M997.1 1161.9V1175.6M986.2 1164.4H999.8M986.2 1172.9H999.8"/></svg>
<svg class="ic" style="left:1009.4px;top:1165.1px" width="10.0" height="8.0" viewBox="1009.4 1165.1 10.0 8.0" fill="none" stroke="#fff" stroke-width="1.3" stroke-linecap="round" stroke-linejoin="round"><path d="M1012.3 1168.1L1014.4 1170.1999999999998L1016.5 1168.1"/></svg>
<svg class="ic" style="left:1034px;top:1159px" width="19" height="19" viewBox="1034 1159 19 19" fill="none" stroke="#fff" stroke-width="1.25" stroke-linecap="round" stroke-linejoin="round"><rect x="1036.7" y="1161.9" width="13" height="13.3" rx="1.8"/></svg>
<svg class="ic" style="left:1060.2px;top:1165.1px" width="10.0" height="8.0" viewBox="1060.2 1165.1 10.0 8.0" fill="none" stroke="#fff" stroke-width="1.3" stroke-linecap="round" stroke-linejoin="round"><path d="M1063.1000000000001 1168.1L1065.2 1170.1999999999998L1067.3 1168.1"/></svg>
<svg class="ic" style="left:1083px;top:1158px" width="22" height="21" viewBox="1083 1158 22 21" fill="none" stroke="#fff" stroke-width="1.2" stroke-linecap="round" stroke-linejoin="round"><path d="M1086.2 1161.6 C1090 1160.4 1095.5 1161 1098.6 1163.3 C1100.6 1165.5 1101.6 1168.5 1101.6 1171.3 L1096.7 1176.3 C1093 1175.6 1090 1174.2 1088.4 1172.4 C1086.8 1169.6 1086 1165.5 1086.2 1161.6Z M1086.6 1162 L1092.6 1167.3"/><circle cx="1094.1" cy="1168.8" r="2.1"/></svg>
<svg class="ic" style="left:1110.2px;top:1165.1px" width="10.0" height="8.0" viewBox="1110.2 1165.1 10.0 8.0" fill="none" stroke="#fff" stroke-width="1.3" stroke-linecap="round" stroke-linejoin="round"><path d="M1113.1000000000001 1168.1L1115.2 1170.1999999999998L1117.3 1168.1"/></svg>
<svg class="ic" style="left:1134px;top:1159px" width="20" height="19" viewBox="1134 1159 20 19" fill="none" stroke="#fff" stroke-width="1.25" stroke-linecap="round" stroke-linejoin="round"><path d="M1137.2 1165.2V1162.9H1150.6V1165.2M1143.9 1162.9V1174M1141 1174.1H1146.9"/></svg>
<svg class="ic" style="left:1170px;top:1158px" width="21" height="21" viewBox="1170 1158 21 21" fill="none" stroke="#fff" stroke-width="1.2" stroke-linecap="round" stroke-linejoin="round"><path d="M1180.2 1160.6 a7.5 7.5 0 1 1 0 15 H1174.3 a1.5 1.5 0 0 1 -1.5 -1.5 V1168.1 a7.5 7.5 0 0 1 7.4 -7.5Z"/></svg>
<svg class="ic" style="left:1196.8px;top:1165.1px" width="10.0" height="8.0" viewBox="1196.8 1165.1 10.0 8.0" fill="none" stroke="#fff" stroke-width="1.3" stroke-linecap="round" stroke-linejoin="round"><path d="M1199.7 1168.1L1201.8 1170.1999999999998L1203.8999999999999 1168.1"/></svg>
<svg class="ic" style="left:1221px;top:1158px" width="19" height="21" viewBox="1221 1158 19 21" fill="none" stroke="#fff" stroke-width="1.2" stroke-linecap="round" stroke-linejoin="round"><path d="M1226.5 1161L1229.9 1164.4L1226.5 1167.8L1223.1 1164.4Z"/><circle cx="1234.8" cy="1164.4" r="2.9"/><rect x="1223.8" y="1170.2" width="5.4" height="5.4" rx="1.4"/><path d="M1234.8 1170V1175.8M1231.9 1172.9H1237.7"/></svg>
<div class="ln" style="left:1252.5px;top:1148px;width:1px;height:41px;background:#3c3c3c"></div>
<div class="ln" style="left:1260px;top:1154.4px;width:81.00px;height:28.40px;background:#393939;border-radius:6px;"></div>
<div class="ln" style="left:1288.6px;top:1157.1px;width:23.30px;height:23.00px;background:#2c2c2c;border-radius:5px;"></div>
<svg class="ic" style="left:1265px;top:1159px" width="18" height="19" viewBox="1265 1159 18 19" fill="none" stroke="#cfcfcf" stroke-width="1.2" stroke-linecap="round" stroke-linejoin="round"><path d="M1268.8 1167.6 C1271.5 1164.6 1275.2 1161.9 1276.3 1163 C1277.5 1164.3 1270.8 1170 1272 1171.3 C1273.2 1172.6 1277.3 1167.4 1278.5 1168.6 C1279.6 1169.7 1275.6 1172.4 1276.6 1173.4 C1277.2 1174 1278.2 1173.5 1278.9 1172.8"/></svg>
<svg class="ic" style="left:1292px;top:1160px" width="18" height="18" viewBox="1292 1160 18 18" fill="none" stroke="#7cc4f8" stroke-width="1.2" stroke-linecap="round" stroke-linejoin="round"><path d="M1306.4 1166.6V1164.8a1.5 1.5 0 0 0 -1.5 -1.5H1296.9a1.5 1.5 0 0 0 -1.5 1.5V1172.3a1.5 1.5 0 0 0 1.5 1.5H1298.8"/><path d="M1295.4 1166.4H1306.4M1298.7 1166.4V1173.8"/><path d="M1301.4 1168.7L1306.9 1170.6L1304.5 1171.9L1303.2 1174.3Z"/></svg>
<svg class="ic" style="left:1318px;top:1159px" width="18" height="19" viewBox="1318 1159 18 19" fill="none" stroke="#cfcfcf" stroke-width="1.2" stroke-linecap="round" stroke-linejoin="round"><path d="M1324.1 1165.1L1321.2 1168.6L1324.1 1172.1M1330 1165.1L1332.9 1168.6L1330 1172.1M1328.6 1163.3L1325.5 1173.9"/></svg>
</body></html>
